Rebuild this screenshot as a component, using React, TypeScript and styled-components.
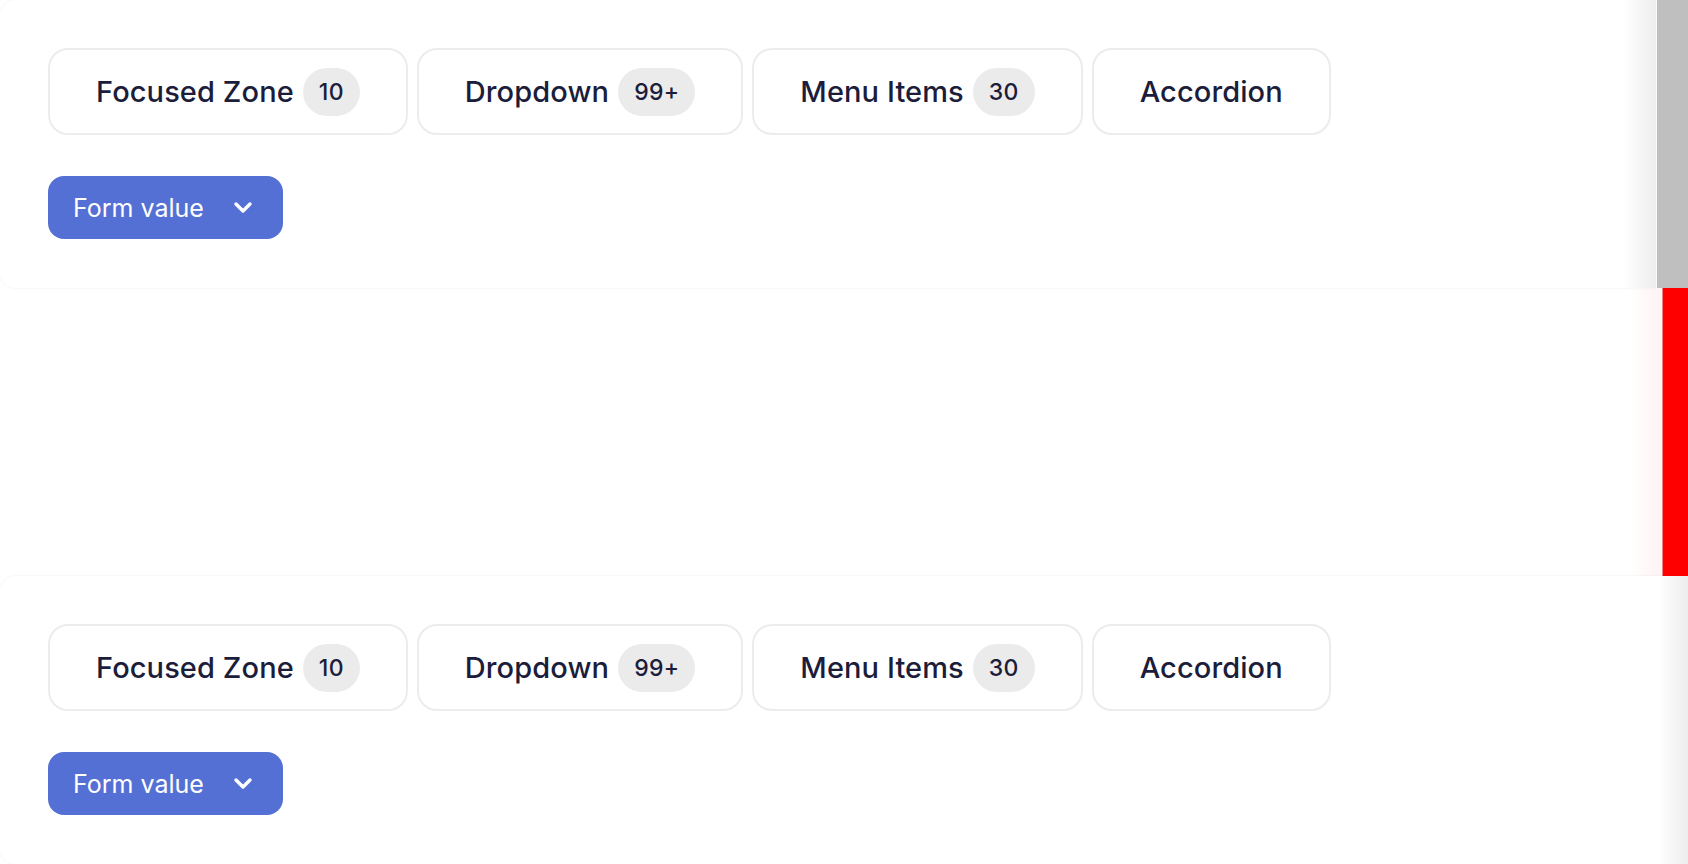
import styled, { createGlobalStyle } from 'styled-components';

const GlobalStyle = createGlobalStyle`
  html, body {
    margin: 0;
    padding: 0;
    background: #ffffff;
    overflow: hidden;
  }

  body {
    font-family: Inter, 'Noto Sans', sans-serif;
    color: #1b1d3a;
  }

  * {
    box-sizing: border-box;
  }
`;

const Page = styled.div`
  width: 1688px;
  height: 864px;

  display: grid;
  grid-template-rows: 288px 288px 288px;
`;

const Row = styled.div`
  display: flex;
  align-items: stretch;
  min-width: 0;
`;

const Panel = styled.section<{ edge?: 'gap' | 'fade' }>`
  flex: 1;
  position: relative;

  display: flex;
  flex-direction: column;
  align-items: flex-start;
  gap: 41px;

  padding: 48px 0 0 48px;
  border-radius: 16px 0 0 16px;
  background-color: white;
  box-shadow: 0px 0px 3px rgba(0, 0, 0, 0.07);

  overflow: hidden;

  &::after {
    content: '';
    position: absolute;
    top: 0;
    right: 0;
    bottom: 0;
    width: ${({ edge }) => (edge === 'fade' ? '30px' : '34px')};
    background: linear-gradient(to right, rgba(0, 0, 0, 0), rgba(0, 0, 0, 0.07));
  }
`;

const Divider = styled.div`
  width: 1px;
  background-color: white;
`;

const ScrollTrack = styled.div`
  width: 31px;
  background-color: #bfbfbf;
`;

const Spacer = styled.div`
  flex: 1;
  position: relative;

  &::after {
    content: '';
    position: absolute;
    top: 0;
    right: 0;
    bottom: 0;
    width: 34px;
    background: linear-gradient(to right, rgba(255, 0, 0, 0), rgba(255, 0, 0, 0.05));
  }
`;

const Marker = styled.div`
  width: 25px;
  background-color: #ff0000;
  box-shadow: -1px 0 0 rgba(230, 60, 60, 0.6);
`;

const TabList = styled.div`
  display: flex;
  gap: 9px;
`;

const Tab = styled.button`
  height: 87px;

  display: flex;
  align-items: center;
  gap: 9px;

  padding: 0 46px;
  border: 2px solid #ececec;
  border-radius: 20px;
  background: white;

  font-family: Inter, 'Noto Sans', sans-serif;
  font-size: 29px;
  font-weight: 500;
  color: #1b1d3a;
  letter-spacing: 0.1px;
  cursor: pointer;
`;

const Count = styled.span`
  height: 48px;

  display: inline-flex;
  align-items: center;
  justify-content: center;

  padding: 0 16px;
  border-radius: 24px;
  background-color: #ebebeb;

  font-size: 23px;
  font-weight: 500;
  letter-spacing: 0.3px;
`;

const Select = styled.button`
  width: 235px;
  height: 63px;

  display: flex;
  align-items: center;
  justify-content: space-between;

  padding: 0 30px 0 25px;
  border: none;
  border-radius: 16px;
  background-color: #5470d4;

  font-family: Inter, 'Noto Sans', sans-serif;
  font-size: 25px;
  font-weight: 400;
  color: white;
  letter-spacing: 0;
  cursor: pointer;
`;

const Chevron = () => (
  <svg width="20" height="13" viewBox="0 0 20 13" fill="none">
    <path d="M3 3 L10 10 L17 3" stroke="white" strokeWidth="3.4" strokeLinecap="round" strokeLinejoin="round" />
  </svg>
);

const tabs = [
  { label: 'Focused Zone', count: '10' },
  { label: 'Dropdown', count: '99+' },
  { label: 'Menu Items', count: '30' },
  { label: 'Accordion' },
];

function Block() {
  return (
    <>
      <TabList>
        {tabs.map((tab) => (
          <Tab key={tab.label}>
            {tab.label}
            {tab.count && <Count>{tab.count}</Count>}
          </Tab>
        ))}
      </TabList>
      <Select>
        Form value
        <Chevron />
      </Select>
    </>
  );
}

export default function App() {
  return (
    <>
      <GlobalStyle />
      <Page>
        <Row>
          <Panel>
            <Block />
          </Panel>
          <Divider />
          <ScrollTrack />
        </Row>
        <Row>
          <Spacer />
          <Marker />
        </Row>
        <Row>
          <Panel edge="fade">
            <Block />
          </Panel>
        </Row>
      </Page>
    </>
  );
}
